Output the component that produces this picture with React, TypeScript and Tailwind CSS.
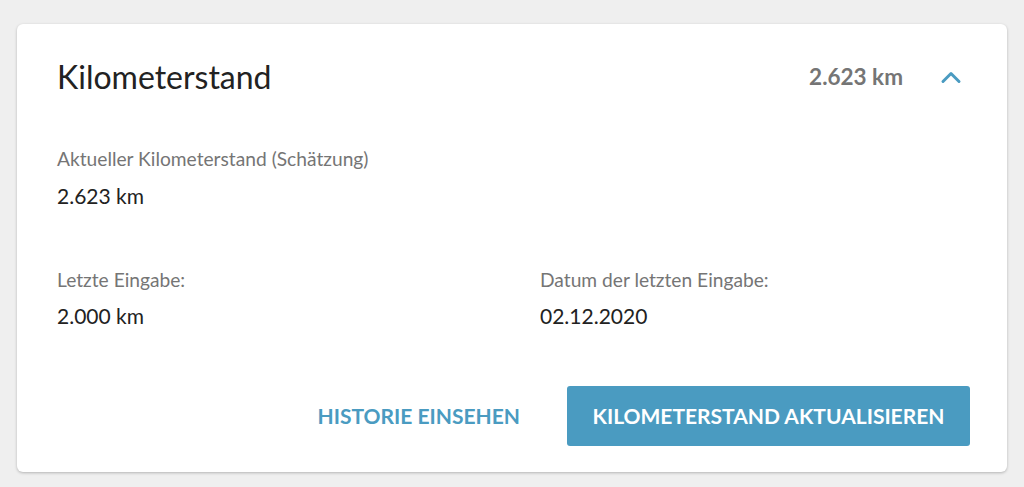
import React from "react";

export default function App() {
  return (
    <div
      className="w-[1024px] h-[487px] bg-[#efefef] pt-[24px] pl-[17px]"
      style={{ fontFamily: "Lato, 'Open Sans', sans-serif" }}
    >
      <div className="w-[990px] h-[448px] bg-white rounded-[6px] shadow-[0_1px_3px_rgba(0,0,0,0.25)] pl-[40px] pr-[37px] pt-[33px]">
        <div className="flex items-center h-[40px]">
          <h1 className="text-[32px] text-[#222] font-normal leading-[40px]">Kilometerstand</h1>
          <div className="ml-auto flex items-center">
            <span className="text-[22.5px] font-bold text-[#757575] leading-[28px]">2.623 km</span>
            <svg width="22" height="14" viewBox="0 0 22 14" className="ml-[37px] mr-[8px]">
              <path d="M3 11.5 L11 3.5 L19 11.5" fill="none" stroke="#4a9bc1" strokeWidth="3" strokeLinecap="round" strokeLinejoin="round" />
            </svg>
          </div>
        </div>
        <div className="mt-[50px]">
          <div className="text-[19.2px] text-[#757575] leading-[24px]">Aktueller Kilometerstand (Schätzung)</div>
          <div className="text-[21px] text-[#222] leading-[28px] mt-[11px]">2.623 km</div>
        </div>
        <div className="grid grid-cols-[483px_1fr] mt-[58px]">
          <div>
            <div className="text-[19.2px] text-[#757575] leading-[24px]">Letzte Eingabe:</div>
            <div className="text-[21px] text-[#222] leading-[28px] mt-[10px]">2.000 km</div>
          </div>
          <div>
            <div className="text-[19.2px] text-[#757575] leading-[24px]">Datum der letzten Eingabe:</div>
            <div className="text-[21px] text-[#222] leading-[28px] mt-[10px]">02.12.2020</div>
          </div>
        </div>
        <div className="flex justify-end items-center mt-[56px] gap-[47px]">
          <button className="text-[21px] font-bold text-[#4a9bc1] leading-[28px]">HISTORIE EINSEHEN</button>
          <button className="w-[403px] h-[60px] bg-[#4a9bc1] rounded-[3px] text-white text-[21px] font-bold leading-[28px]">
            KILOMETERSTAND AKTUALISIEREN
          </button>
        </div>
      </div>
    </div>
  );
}
